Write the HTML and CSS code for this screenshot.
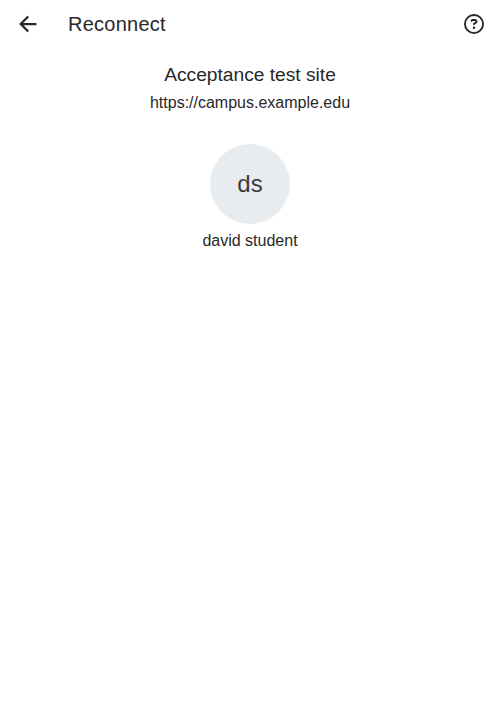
FILE: index.html
```html
<!DOCTYPE html>
<html lang="en">
<head>
<meta charset="utf-8">
<title>Reconnect</title>
<link rel="stylesheet" href="styles.css">
</head>
<body>
<header class="toolbar">
  <button class="icon-button" aria-label="Back">
    <svg class="icon-back" viewBox="0 0 512 512"><path d="M244 400 100 256l144-144M120 256h292"/></svg>
  </button>
  <h1 class="toolbar-title">Reconnect</h1>
  <button class="icon-button help" aria-label="Help">
    <svg class="icon-help" viewBox="0 0 512 512"><path d="M464 256A208 208 0 1 0 48 256a208 208 0 1 0 416 0zM0 256a256 256 0 1 1 512 0A256 256 0 1 1 0 256zm169.800-90.700c7.900-22.300 29.100-37.300 52.800-37.300h58.300c34.900 0 63.100 28.300 63.100 63.100c0 22.600-12.100 43.500-31.700 54.800L280 264.400c-.2 13-10.900 23.600-24 23.600c-13.300 0-24-10.700-24-24V250.500c0-8.600 4.600-16.500 12.100-20.800l44.300-25.400c4.700-2.700 7.600-7.700 7.600-13.100c0-8.400-6.800-15.100-15.100-15.100H222.600c-3.400 0-6.400 2.100-7.500 5.300l-.4 1.200c-4.400 12.500-18.200 19-30.600 14.600s-19-18.200-14.600-30.600l.3-1.300zM224 352a32 32 0 1 1 64 0 32 32 0 1 1-64 0z"/></svg>
  </button>
</header>
<main class="content">
  <p class="site-name">Acceptance test site</p>
  <p class="site-url">https://campus.example.edu</p>
  <div class="avatar">ds</div>
  <p class="user-name">david student</p>
</main>
</body>
</html>
```

FILE: styles.css
```css
* { box-sizing: border-box; }
body {
  margin: 0;
  background: #fff;
  color: #282828;
  font-family: "Liberation Sans", Arial, sans-serif;
  font-size: 16px;
}
.toolbar {
  display: flex;
  align-items: center;
  height: 48px;
  padding: 0 4px;
}
.icon-button {
  display: flex;
  align-items: center;
  justify-content: center;
  width: 48px;
  height: 48px;
  padding: 0;
  border: 0;
  background: none;
  color: inherit;
}
.help { width: 44px; }
.icon-back {
  width: 24px;
  height: 24px;
  fill: none;
  stroke: currentColor;
  stroke-width: 48;
  stroke-linecap: square;
  stroke-miterlimit: 10;
}
.icon-help {
  width: 20px;
  height: 20px;
  fill: currentColor;
}
.toolbar-title {
  flex: 1;
  margin: 0;
  padding-left: 16px;
  font-size: 20px;
  font-weight: 400;
  line-height: 24px;
  letter-spacing: 0.24px;
}
.content {
  display: flex;
  flex-direction: column;
  align-items: center;
  padding-top: 16px;
}
.site-name {
  margin: 0;
  font-size: 19.2px;
  line-height: 22px;
}
.site-url {
  margin: 7px 0 0;
  line-height: 19px;
}
.avatar {
  display: flex;
  align-items: center;
  justify-content: center;
  width: 80px;
  height: 80px;
  margin-top: 32px;
  border-radius: 50%;
  background: #e9ecef;
  color: #3a3a40;
  font-size: 24px;
}
.user-name {
  margin: 7px 0 0;
  line-height: 19px;
}
```
